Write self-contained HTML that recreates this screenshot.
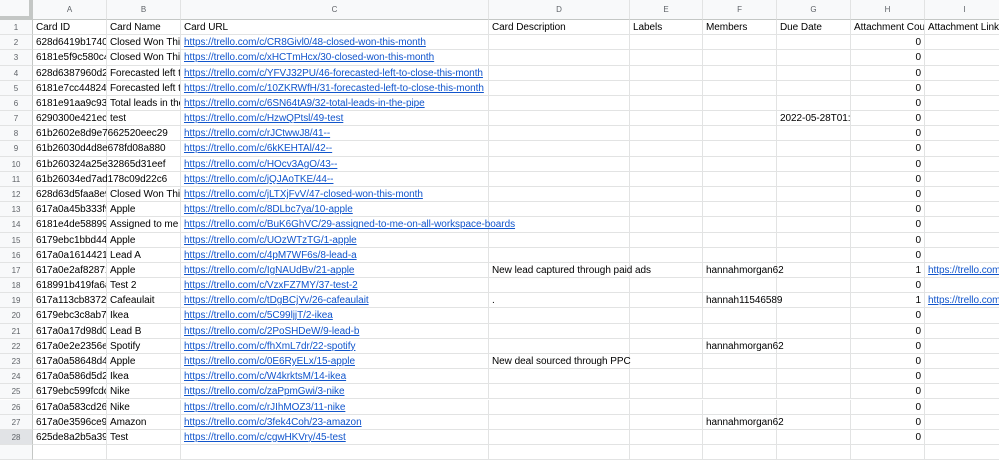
<!DOCTYPE html>
<html><head><meta charset="utf-8"><style>
*{margin:0;padding:0;box-sizing:border-box}
body{width:999px;height:451px;overflow:hidden;background:#fff;font-family:"Liberation Sans",Arial,sans-serif;font-size:10px;letter-spacing:-0.05px;color:#000;position:relative}
.r{position:absolute;left:0;width:1100px;height:15.18px}
.c{position:absolute;top:0;height:100%;border-right:1px solid #e2e3e3;border-bottom:1px solid #e2e3e3;white-space:nowrap;overflow:hidden;padding:0 3px;line-height:15px}
.v{overflow:visible}
.n{left:0;width:33px;background:#f8f9fa;border-right:1px solid #c4c7c5;color:#5f6368;font-size:8px;text-align:center}
.a{left:33px;width:74px}.b{left:107px;width:74px}.cc{left:181px;width:308px}.d{left:489px;width:141px}.e{left:630px;width:73px}.f{left:703px;width:74px}.g{left:777px;width:74px}.h{left:851px;width:74px;text-align:right}.i{left:925px;width:80px}
.l{color:#1155cc;text-decoration:underline}
.hd .c{background:#f8f9fa;color:#5f6368;font-size:8px;text-align:center;border-bottom:1px solid #c4c7c5;line-height:19px}
.hd{height:20px;top:0}
.hd .n{border-right:4px solid #c4c7c5;border-bottom:4px solid #c4c7c5}
.sel .n{background:#e1e3e6}
</style></head><body>
<div class="r hd"><div class="c n"></div><div class="c a">A</div><div class="c b">B</div><div class="c cc">C</div><div class="c d">D</div><div class="c e">E</div><div class="c f">F</div><div class="c g">G</div><div class="c h" style="text-align:center">H</div><div class="c i">I</div></div>
<div class="r" style="top:20px"><div class="c n">1</div><div class="c a">Card ID</div><div class="c b">Card Name</div><div class="c cc">Card URL</div><div class="c d">Card Description</div><div class="c e">Labels</div><div class="c f">Members</div><div class="c g">Due Date</div><div class="c h" style="text-align:left">Attachment Count</div><div class="c i">Attachment Links</div></div>
<div class="r" style="top:35.18px"><div class="c n">2</div><div class="c a">628d6419b17404cd</div><div class="c b">Closed Won This Month</div><div class="c cc l">https://trello.com/c/CR8Givl0/48-closed-won-this-month</div><div class="c d"></div><div class="c e"></div><div class="c f"></div><div class="c g"></div><div class="c h">0</div><div class="c i"></div></div>
<div class="r" style="top:50.36px"><div class="c n">3</div><div class="c a">6181e5f9c580c4ab</div><div class="c b">Closed Won This Month</div><div class="c cc l">https://trello.com/c/xHCTmHcx/30-closed-won-this-month</div><div class="c d"></div><div class="c e"></div><div class="c f"></div><div class="c g"></div><div class="c h">0</div><div class="c i"></div></div>
<div class="r" style="top:65.54px"><div class="c n">4</div><div class="c a">628d6387960d2ab</div><div class="c b">Forecasted left to close</div><div class="c cc l">https://trello.com/c/YFVJ32PU/46-forecasted-left-to-close-this-month</div><div class="c d"></div><div class="c e"></div><div class="c f"></div><div class="c g"></div><div class="c h">0</div><div class="c i"></div></div>
<div class="r" style="top:80.72px"><div class="c n">5</div><div class="c a">6181e7cc448240ab</div><div class="c b">Forecasted left to close</div><div class="c cc l">https://trello.com/c/10ZKRWfH/31-forecasted-left-to-close-this-month</div><div class="c d"></div><div class="c e"></div><div class="c f"></div><div class="c g"></div><div class="c h">0</div><div class="c i"></div></div>
<div class="r" style="top:95.9px"><div class="c n">6</div><div class="c a">6181e91aa9c938ab</div><div class="c b">Total leads in the pipe</div><div class="c cc l">https://trello.com/c/6SN64tA9/32-total-leads-in-the-pipe</div><div class="c d"></div><div class="c e"></div><div class="c f"></div><div class="c g"></div><div class="c h">0</div><div class="c i"></div></div>
<div class="r" style="top:111.08px"><div class="c n">7</div><div class="c a">6290300e421ec1ab</div><div class="c b">test</div><div class="c cc l">https://trello.com/c/HzwQPtsl/49-test</div><div class="c d"></div><div class="c e"></div><div class="c f"></div><div class="c g">2022-05-28T01:59:00.000Z</div><div class="c h">0</div><div class="c i"></div></div>
<div class="r" style="top:126.26px"><div class="c n">8</div><div class="c a v">61b2602e8d9e7662520eec29</div><div class="c b"></div><div class="c cc l">https://trello.com/c/rJCtwwJ8/41--</div><div class="c d"></div><div class="c e"></div><div class="c f"></div><div class="c g"></div><div class="c h">0</div><div class="c i"></div></div>
<div class="r" style="top:141.44px"><div class="c n">9</div><div class="c a v">61b26030d4d8e678fd08a880</div><div class="c b"></div><div class="c cc l">https://trello.com/c/6kKEHTAl/42--</div><div class="c d"></div><div class="c e"></div><div class="c f"></div><div class="c g"></div><div class="c h">0</div><div class="c i"></div></div>
<div class="r" style="top:156.62px"><div class="c n">10</div><div class="c a v">61b260324a25e32865d31eef</div><div class="c b"></div><div class="c cc l">https://trello.com/c/HOcv3AgO/43--</div><div class="c d"></div><div class="c e"></div><div class="c f"></div><div class="c g"></div><div class="c h">0</div><div class="c i"></div></div>
<div class="r" style="top:171.8px"><div class="c n">11</div><div class="c a v">61b26034ed7ad178c09d22c6</div><div class="c b"></div><div class="c cc l">https://trello.com/c/jQJAoTKE/44--</div><div class="c d"></div><div class="c e"></div><div class="c f"></div><div class="c g"></div><div class="c h">0</div><div class="c i"></div></div>
<div class="r" style="top:186.98px"><div class="c n">12</div><div class="c a">628d63d5faa8e9ab</div><div class="c b">Closed Won This Month</div><div class="c cc l">https://trello.com/c/jLTXjFvV/47-closed-won-this-month</div><div class="c d"></div><div class="c e"></div><div class="c f"></div><div class="c g"></div><div class="c h">0</div><div class="c i"></div></div>
<div class="r" style="top:202.16px"><div class="c n">13</div><div class="c a">617a0a45b333f9ab</div><div class="c b">Apple</div><div class="c cc l">https://trello.com/c/8DLbc7ya/10-apple</div><div class="c d"></div><div class="c e"></div><div class="c f"></div><div class="c g"></div><div class="c h">0</div><div class="c i"></div></div>
<div class="r" style="top:217.34px"><div class="c n">14</div><div class="c a">6181e4de58899ab</div><div class="c b">Assigned to me on all</div><div class="c cc l v">https://trello.com/c/BuK6GhVC/29-assigned-to-me-on-all-workspace-boards</div><div class="c d"></div><div class="c e"></div><div class="c f"></div><div class="c g"></div><div class="c h">0</div><div class="c i"></div></div>
<div class="r" style="top:232.52px"><div class="c n">15</div><div class="c a">6179ebc1bbd44ab</div><div class="c b">Apple</div><div class="c cc l">https://trello.com/c/UOzWTzTG/1-apple</div><div class="c d"></div><div class="c e"></div><div class="c f"></div><div class="c g"></div><div class="c h">0</div><div class="c i"></div></div>
<div class="r" style="top:247.7px"><div class="c n">16</div><div class="c a">617a0a1614421ab</div><div class="c b">Lead A</div><div class="c cc l">https://trello.com/c/4pM7WF6s/8-lead-a</div><div class="c d"></div><div class="c e"></div><div class="c f"></div><div class="c g"></div><div class="c h">0</div><div class="c i"></div></div>
<div class="r" style="top:262.88px"><div class="c n">17</div><div class="c a">617a0e2af82871ab</div><div class="c b">Apple</div><div class="c cc l">https://trello.com/c/IgNAUdBv/21-apple</div><div class="c d v">New lead captured through paid ads</div><div class="c e"></div><div class="c f v">hannahmorgan62</div><div class="c g"></div><div class="c h">1</div><div class="c i l">https://trello.com/1/cards</div></div>
<div class="r" style="top:278.06px"><div class="c n">18</div><div class="c a">618991b419fa6ab</div><div class="c b">Test 2</div><div class="c cc l">https://trello.com/c/VzxFZ7MY/37-test-2</div><div class="c d"></div><div class="c e"></div><div class="c f"></div><div class="c g"></div><div class="c h">0</div><div class="c i"></div></div>
<div class="r" style="top:293.24px"><div class="c n">19</div><div class="c a">617a113cb83725ab</div><div class="c b">Cafeaulait</div><div class="c cc l">https://trello.com/c/tDgBCjYv/26-cafeaulait</div><div class="c d">.</div><div class="c e"></div><div class="c f v">hannah11546589</div><div class="c g"></div><div class="c h">1</div><div class="c i l">https://trello.com/1/cards</div></div>
<div class="r" style="top:308.42px"><div class="c n">20</div><div class="c a">6179ebc3c8ab7ab</div><div class="c b">Ikea</div><div class="c cc l">https://trello.com/c/5C99ljjT/2-ikea</div><div class="c d"></div><div class="c e"></div><div class="c f"></div><div class="c g"></div><div class="c h">0</div><div class="c i"></div></div>
<div class="r" style="top:323.6px"><div class="c n">21</div><div class="c a">617a0a17d98d0ab</div><div class="c b">Lead B</div><div class="c cc l">https://trello.com/c/2PoSHDeW/9-lead-b</div><div class="c d"></div><div class="c e"></div><div class="c f"></div><div class="c g"></div><div class="c h">0</div><div class="c i"></div></div>
<div class="r" style="top:338.78px"><div class="c n">22</div><div class="c a">617a0e2e2356eab</div><div class="c b">Spotify</div><div class="c cc l">https://trello.com/c/fhXmL7dr/22-spotify</div><div class="c d"></div><div class="c e"></div><div class="c f v">hannahmorgan62</div><div class="c g"></div><div class="c h">0</div><div class="c i"></div></div>
<div class="r" style="top:353.96px"><div class="c n">23</div><div class="c a">617a0a58648d4ab</div><div class="c b">Apple</div><div class="c cc l">https://trello.com/c/0E6RyELx/15-apple</div><div class="c d v">New deal sourced through PPC</div><div class="c e"></div><div class="c f"></div><div class="c g"></div><div class="c h">0</div><div class="c i"></div></div>
<div class="r" style="top:369.14px"><div class="c n">24</div><div class="c a">617a0a586d5d2ab</div><div class="c b">Ikea</div><div class="c cc l">https://trello.com/c/W4krktsM/14-ikea</div><div class="c d"></div><div class="c e"></div><div class="c f"></div><div class="c g"></div><div class="c h">0</div><div class="c i"></div></div>
<div class="r" style="top:384.32px"><div class="c n">25</div><div class="c a">6179ebc599fcdcab</div><div class="c b">Nike</div><div class="c cc l">https://trello.com/c/zaPpmGwi/3-nike</div><div class="c d"></div><div class="c e"></div><div class="c f"></div><div class="c g"></div><div class="c h">0</div><div class="c i"></div></div>
<div class="r" style="top:399.5px"><div class="c n">26</div><div class="c a">617a0a583cd26ab</div><div class="c b">Nike</div><div class="c cc l">https://trello.com/c/rJIhMOZ3/11-nike</div><div class="c d"></div><div class="c e"></div><div class="c f"></div><div class="c g"></div><div class="c h">0</div><div class="c i"></div></div>
<div class="r" style="top:414.68px"><div class="c n">27</div><div class="c a">617a0e3596ce9ab</div><div class="c b">Amazon</div><div class="c cc l">https://trello.com/c/3fek4Coh/23-amazon</div><div class="c d"></div><div class="c e"></div><div class="c f v">hannahmorgan62</div><div class="c g"></div><div class="c h">0</div><div class="c i"></div></div>
<div class="r sel" style="top:429.86px"><div class="c n">28</div><div class="c a">625de8a2b5a39ab</div><div class="c b">Test</div><div class="c cc l">https://trello.com/c/cgwHKVry/45-test</div><div class="c d"></div><div class="c e"></div><div class="c f"></div><div class="c g"></div><div class="c h">0</div><div class="c i"></div></div>
<div class="r" style="top:445.04px"><div class="c n"></div><div class="c a"></div><div class="c b"></div><div class="c cc"></div><div class="c d"></div><div class="c e"></div><div class="c f"></div><div class="c g"></div><div class="c h"></div><div class="c i"></div></div>
</body></html>
